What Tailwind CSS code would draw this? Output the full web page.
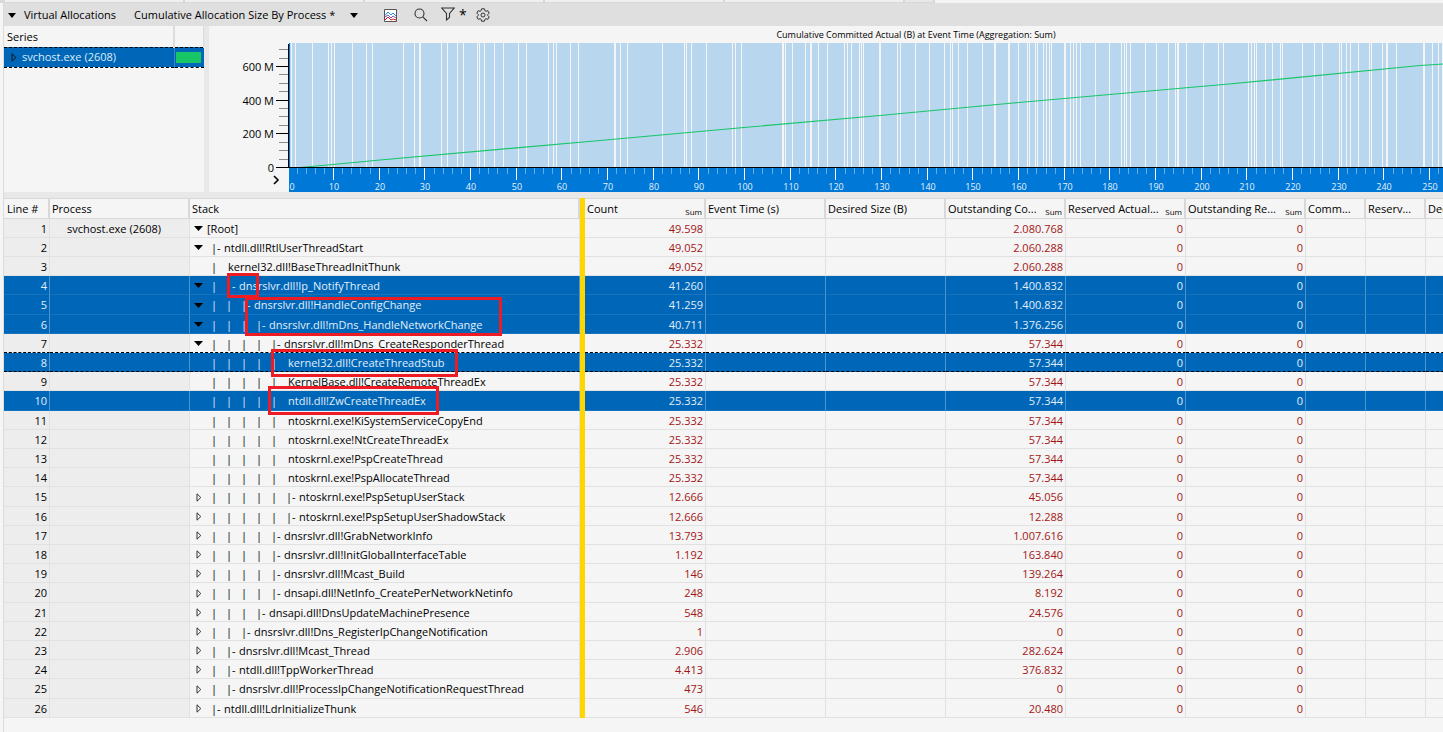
<!DOCTYPE html>
<html lang="en">
<head>
<meta charset="utf-8">
<title>Virtual Allocations</title>
<script src="https://cdn.jsdelivr.net/npm/@tailwindcss/browser@4"></script>
</head>
<body class="min-h-screen overflow-hidden bg-[#f5f5f5] font-['Open_Sans',sans-serif] text-[11px] leading-4 text-black">
<div class="flex h-[3px] gap-0.5 bg-[#d8d8d8] pl-[5px]" aria-hidden="true">
  <div class="h-0.5 w-[178px] bg-[#f0f0f0]"></div><div class="h-0.5 w-[178px] bg-[#f0f0f0]"></div><div class="h-0.5 w-[178px] bg-[#f0f0f0]"></div><div class="h-0.5 w-[178px] bg-[#f0f0f0]"></div><div class="h-0.5 w-[178px] bg-[#f0f0f0]"></div><div class="h-0.5 w-7 bg-[#e8e8e8]"></div><div class="h-[3px] flex-1 bg-[#f5f5f5]"></div>
</div>
<main class="ml-[3px] min-h-[729px] border-l border-[#dcdcdc]">
  <header class="flex h-[23px] items-center bg-[#dfdfdf] pl-1 pt-px">
    <button class="flex items-center gap-2" aria-label="Collapse Virtual Allocations"><svg width="8" height="5" viewBox="0 0 8 5"><path d="M0 0h8L4 5z"/></svg><span>Virtual Allocations</span></button>
    <label class="ml-[18px] flex items-center gap-3.5"><select id="preset" aria-label="Preset" class="appearance-none bg-transparent"><option>Cumulative Allocation Size By Process *</option></select><svg width="8" height="5" viewBox="0 0 8 5"><path d="M0 0h8L4 5z"/></svg></label>
    <div id="tools" class="ml-[26px] flex items-center gap-[17px]">
      <button aria-label="Graph"><svg class="block" width="13" height="13" viewBox="0 0 13 13" fill="none"><path d="M.5.5h12v12H.5z" fill="#fff" stroke="#555"/><path d="M1 6.500l3-3.500 3 3 2-2 3 3" stroke="#1a8fe0"/><path d="M1 8l3-2 3 3 2-2 3 2" stroke="#8a50b0"/><path d="M1 11l3-3 3 3 2-1 3 1" stroke="#e02030"/></svg></button>
      <button aria-label="Search"><svg class="block" width="14" height="14" viewBox="0 0 14 14" fill="none" stroke="#333" stroke-width="1.1"><circle cx="5.5" cy="5.5" r="4.5"/><path d="M8.8 8.8l4.2 4.2"/></svg></button>
      <button aria-label="Filter" class="-ml-1 flex gap-1"><svg width="14" height="14" viewBox="0 0 14 14" fill="none" stroke="#333" stroke-width="1.1"><path d="M.8 1h12.4L8.5 6.5V10.500L5.5 13V6.500z"/></svg><span class="text-[14px] leading-4">*</span></button>
      <button aria-label="Settings" class="-ml-2"><svg class="block" width="14" height="14" viewBox="0 0 14 14" fill="none" stroke="#333" stroke-linejoin="round"><path d="M5.600.8h2.800l.5 1.900 1 .6 1.900-.6 1.400 2.400L11.800 6.500v1l1.400 1.400-1.400 2.400-1.900-.6-1 .6-.5 1.900H5.600l-.5-1.900-1-.6-1.900.6L.8 8.900 2.200 7.500v-1L.8 5.100l1.400-2.400 1.900.6 1-.6z"/><circle cx="7" cy="7" r="2"/></svg></button>
    </div>
  </header>
  <section class="flex h-[167px] border-b border-[#e8e8e8]">
    <div class="w-[200px] shrink-0">
      <table class="w-full table-fixed border-collapse" aria-label="Series">
        <colgroup><col class="w-[170px]"><col></colgroup>
        <thead><tr class="h-[21px]"><th class="border-r-2 border-[#dcdcdc] p-0 pl-[3px] pt-px text-left font-normal">Series</th><th class="border-r border-[#dcdcdc] p-0"></th></tr></thead>
        <tbody><tr class="h-5 border-y border-dashed border-black bg-[#0067b8] text-[#dcecf8]"><td class="border-r border-[#3385c6] p-0"><span class="flex items-center gap-[5px] pl-[7px]"><svg width="6" height="9" viewBox="0 0 6 9" fill="none" stroke="#111"><path d="M1 .8v7.400l3.800-3.700z"/></svg>svchost.exe (2608)</span></td><td class="p-0 pl-px"><div class="h-[11px] w-[25px] bg-[#17c667]"></div></td></tr></tbody>
      </table>
    </div>
    <div class="w-[5px] shrink-0 bg-[#e8e8e8]"></div>
    <svg id="chart" class="block h-[166px] min-w-0 flex-1 font-['Open_Sans',sans-serif]" role="img" aria-label="Cumulative Committed Actual"></svg>
  </section>
  <section class="relative overflow-hidden border-t-[5px] border-[#e8e8e8]">
    <table class="w-[1501px] table-fixed border-separate border-spacing-0">
      <colgroup><col class="w-[46px]"><col class="w-[140px]"><col class="w-[390px]"><col class="w-[5px]"><col class="w-[121px]"><col class="w-[120px]"><col class="w-[120px]"><col class="w-[120px]"><col class="w-[120px]"><col class="w-[120px]"><col class="w-[60px]"><col class="w-[60px]"><col></colgroup>
      <thead><tr id="head" class="h-[21px]"></tr></thead>
      <tbody id="rows"></tbody>
    </table>
    <div aria-hidden="true">
      <div class="absolute left-[223px] top-[75px] h-[25px] w-8 border-[3px] border-[#ed1c24]"></div>
      <div class="absolute left-[241px] top-[99px] h-[39px] w-[257px] border-[3px] border-[#ed1c24]"></div>
      <div class="absolute left-[267px] top-[151px] h-7 w-[187px] border-[3px] border-[#ed1c24]"></div>
      <div class="absolute left-[264px] top-[188px] h-[29px] w-[171px] border-[3px] border-[#ed1c24]"></div>
    </div>
  </section>
</main>
<script>
// Chart, drawn in coordinates whose origin is the chart panel's corner
const OX = 209, OY = 26;
const gaps = [291,295,312,328,331,334,352,366,372,403,414,441,447,457,463,477,479,484,494,503,518,526,548,553,556,570,578,620,627,662,684,686,691,706,732,735,741,785,792,805,818,827,844,847,851,859,861,863,897,900,915,929,944,950,952,958,967,982,1018,1027,1029,1035,1037,1043,1046,1049,1051,1070,1073,1076,1080,1095,1109,1121,1124,1126,1130,1145,1156,1168,1175,1186,1203,1218,1223,1248,1251,1254,1256,1265,1272,1280,1282,1302,1314,1322,1339,1341,1346,1350,1358,1369,1371,1382,1396,1432,1438,1442];
const wide = [419,614,782,810,879,994,1008,1064,1177,1386,1423];
const rect = (x, y, w, h, c) => `<rect x="${x - OX}" y="${y - OY}" width="${w}" height="${h}" fill="${c}"/>`;
let s = rect(289, 43, 2000, 124, '#b8d6ee');
gaps.forEach(x => s += rect(x, 43, 1, 124, '#f5f5f5'));
wide.forEach(x => s += rect(x, 43, 2, 124, '#f5f5f5'));
s += rect(289, 43, 1, 124, '#0078d7') + rect(289, 168, 2000, 24, '#0078d7');
s += `<polyline fill="none" stroke="#17c667" stroke-width="1.2" points="${[[300,167.500],[333,164.500],[380,160],[600,140.500],[744,127.500],[880,115.500],[1013,103],[1229,84],[1420,65.500],[1443,64]].map(p => (p[0]-OX)+','+(p[1]-OY)).join(' ')}"/>`;
s += rect(288, 44, 1, 124, '#000') + rect(288, 167, 2000, 1, '#000');
for (let i = 0; i < 15; i++) {
  const y = Math.round(167 - i * 8.42);
  if (i % 4) s += rect(279, y, 9, 1, '#8c8c8c');
  else {
    s += rect(276, y, 12, 1, '#000');
    s += `<text x="${274 - OX}" y="${y + 5 - OY}" text-anchor="end" font-size="11">${i ? i * 50 + ' M' : '0'}</text>`;
  }
}
for (let v = 0; v <= 256; v += 2) {
  const x = Math.round(287.400 + v * 4.567);
  if (v % 10) s += rect(x, 168, 1, 6, '#66aee7');
  else {
    if (v) s += rect(x, 168, 1, 12, '#fff');
    s += `<text x="${(v ? x + 1 : 292) - OX}" y="${190 - OY}" text-anchor="middle" font-size="9" fill="#e6f2fb">${v}</text>`;
  }
}
s += `<path d="M65 150l4 4-4 4" fill="none" stroke="#000" stroke-width="1.6"/>`;
s += `<text x="707" y="12" text-anchor="middle" font-size="9">Cumulative Committed Actual (B) at Event Time (Aggregation: Sum)</text>`;
document.getElementById('chart').innerHTML = s;

// Table header
const heads = [['Line #'],['Process'],['Stack'],null,['Count',1],['Event Time (s)'],['Desired Size (B)'],['Outstanding Co...',1],['Reserved Actual...',1],['Outstanding Re...',1],['Comm...'],['Reserv...'],['Decommit']];
document.getElementById('head').innerHTML = heads.map((h, i) => h
  ? `<th class="border-y border-r-2 border-[#d8d8d8] p-0 ${i ? 'pl-0.5' : 'pl-[3px]'} text-left font-normal"><div class="flex items-end justify-between whitespace-nowrap pr-0.5 pt-px"><span>${h[0]}</span>${h[1] ? '<span class="text-[8px] leading-[10px]">Sum</span>' : ''}</div></th>`
  : '<th class="bg-[#ffd700] p-0"></th>').join('');

// Rows: toggle (o open, c closed, - none), depth, has branch mark, name, count, outstanding commit
const data = [
['o',0,0,'[Root]','49.598','2.080.768'],['o',0,1,'ntdll.dll!RtlUserThreadStart','49.052','2.060.288'],['-',1,0,'kernel32.dll!BaseThreadInitThunk','49.052','2.060.288'],
['o',1,1,'dnsrslvr.dll!Ip_NotifyThread','41.260','1.400.832'],['o',2,1,'dnsrslvr.dll!HandleConfigChange','41.259','1.400.832'],['o',3,1,'dnsrslvr.dll!mDns_HandleNetworkChange','40.711','1.376.256'],
['o',4,1,'dnsrslvr.dll!mDns_CreateResponderThread','25.332','57.344'],['-',5,0,'kernel32.dll!CreateThreadStub','25.332','57.344'],['-',5,0,'KernelBase.dll!CreateRemoteThreadEx','25.332','57.344'],
['-',5,0,'ntdll.dll!ZwCreateThreadEx','25.332','57.344'],['-',5,0,'ntoskrnl.exe!KiSystemServiceCopyEnd','25.332','57.344'],['-',5,0,'ntoskrnl.exe!NtCreateThreadEx','25.332','57.344'],
['-',5,0,'ntoskrnl.exe!PspCreateThread','25.332','57.344'],['-',5,0,'ntoskrnl.exe!PspAllocateThread','25.332','57.344'],['c',5,1,'ntoskrnl.exe!PspSetupUserStack','12.666','45.056'],
['c',5,1,'ntoskrnl.exe!PspSetupUserShadowStack','12.666','12.288'],['c',4,1,'dnsrslvr.dll!GrabNetworkInfo','13.793','1.007.616'],['c',4,1,'dnsrslvr.dll!InitGlobalInterfaceTable','1.192','163.840'],
['c',4,1,'dnsrslvr.dll!Mcast_Build','146','139.264'],['c',4,1,'dnsapi.dll!NetInfo_CreatePerNetworkNetinfo','248','8.192'],['c',3,1,'dnsapi.dll!DnsUpdateMachinePresence','548','24.576'],
['c',2,1,'dnsrslvr.dll!Dns_RegisterIpChangeNotification','1','0'],['c',1,1,'dnsrslvr.dll!Mcast_Thread','2.906','282.624'],['c',1,1,'ntdll.dll!TppWorkerThread','4.413','376.832'],
['c',1,1,'dnsrslvr.dll!ProcessIpChangeNotificationRequestThread','473','0'],['c',0,1,'ntdll.dll!LdrInitializeThunk','546','20.480']];
const selected = [4,5,6,8,10];
const OPEN = '<button class="flex w-[17px] items-center pl-1" aria-label="Collapse"><svg width="9" height="5" viewBox="0 0 9 5"><path d="M0 0h9L4.500 5z"/></svg></button>';
const CLOSED = '<button class="flex w-[17px] items-center pl-1.5" aria-label="Expand"><svg width="6" height="9" viewBox="0 0 6 9" fill="none" stroke="#333"><path d="M1 .8v7.400l3.800-3.700z"/></svg></button>';
document.getElementById('rows').innerHTML = data.map((d, i) => {
  const n = i + 1, sel = selected.includes(n);
  const line = n === 7 || n === 8 ? 'border-b border-dashed border-b-black' : sel ? 'border-b border-b-[#1673be]' : 'border-b border-b-[#e1e1e1]';
  const edge = sel ? 'border-r border-r-[#4d95cd]' : 'border-r border-r-[#e1e1e1]';
  const solid = '[border-right-style:solid]';
  const cell = `${line} ${edge} ${solid} p-0 pt-px`;
  const side = sel ? '' : 'bg-[#ededed]';
  const num = v => `<td class="${cell} pr-0.5 text-right ${sel ? '' : 'text-[#a31515]'}">${v}</td>`;
  const empty = `<td class="${cell}"></td>`;
  const pipes = '<span class="w-[15px] shrink-0">|</span>'.repeat(d[1]);
  const branch = d[2] ? '<span class="w-[13px] shrink-0">|-</span>' : i ? '<span class="w-0.5 shrink-0"></span>' : '';
  const lead = i ? '<span class="w-1 shrink-0"></span>' : '';
  return `<tr class="${n % 5 ? 'h-[19px]' : 'h-5'} ${sel ? 'bg-[#0067b8] text-[#e2eef8]' : ''}">
<td class="${cell} ${side} pr-0.5 text-right">${n}</td><td class="${cell} ${side} pl-[17px]">${i ? '' : 'svchost.exe (2608)'}</td>
<td class="${cell}"><div class="flex h-[17px] items-center whitespace-nowrap">${d[0] === 'o' ? OPEN : d[0] === 'c' ? CLOSED : '<span class="w-[17px]"></span>'}${lead}${pipes}${branch}<span>${d[3]}</span></div></td>
<td class="bg-[#ffd700] p-0"></td>${num(d[4])}${empty}${empty}${num(d[5])}${num('0')}${num('0')}${empty}${empty}${empty}</tr>`;
}).join('');
</script>
</body>
</html>
